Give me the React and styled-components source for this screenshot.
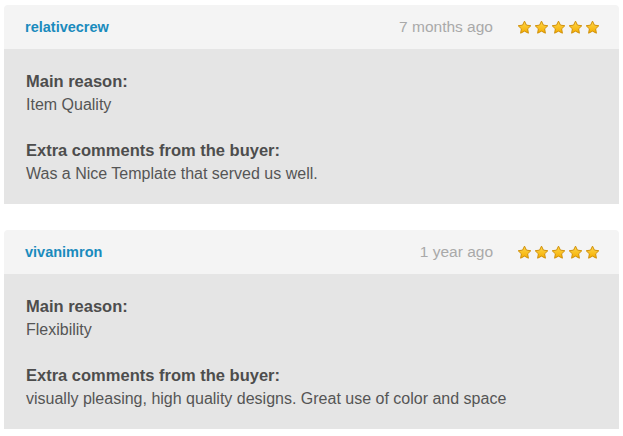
import React from 'react';
import styled, { createGlobalStyle } from 'styled-components';

const GlobalStyle = createGlobalStyle`
    body {
        margin: 0;
        background: #fff;
        font-family: "Liberation Sans", Arial, sans-serif;
    }
`;

const List = styled.div`
    display: flex;
    flex-direction: column;
    gap: 26px;
    padding: 5px 4px 0 4px;
`;

const Card = styled.div`
    border-radius: 4px 4px 0 0;
    overflow: hidden;
`;

const Header = styled.div`
    display: flex;
    align-items: center;
    height: 44px;
    padding: 0 19px 0 21px;
    background: #f4f4f4;
`;

const User = styled.a`
    flex: 1;
    font-size: 14.5px;
    font-weight: bold;
    color: #1a8bbd;
    text-decoration: none;
`;

const Time = styled.span`
    font-size: 15.5px;
    color: #a9a9a9;
    margin-right: 24px;
`;

const Stars = styled.div`
    display: flex;
    gap: 2px;
`;

const Body = styled.div`
    background: #e5e5e5;
    padding: 20px 22px 18px 22px;
    display: flex;
    flex-direction: column;
    gap: 21px;
`;

const Label = styled.div`
    font-size: 16.5px;
    font-weight: bold;
    line-height: 24px;
    color: #4d4d4d;
`;

const Text = styled.div`
    font-size: 16px;
    line-height: 24px;
    color: #555;
`;

const Star = () => (
    <svg width="15" height="15" viewBox="0 0 24 24">
        <defs>
            <linearGradient id="sg" x1="0" y1="0" x2="0" y2="1">
                <stop offset="0" stopColor="#ffd84a" />
                <stop offset="1" stopColor="#f5ad00" />
            </linearGradient>
        </defs>
        <path
            d="M12 1.8l3.1 6.4 7 1-5.1 4.9 1.2 7-6.2-3.3-6.2 3.3 1.2-7-5.1-4.9 7-1z"
            fill="url(#sg)"
            stroke="#d0900a"
            strokeWidth="1.6"
            strokeLinejoin="round"
        />
    </svg>
);

const reviews = [
    {
        user: 'relativecrew',
        time: '7 months ago',
        reason: 'Item Quality',
        comment: 'Was a Nice Template that served us well.'
    },
    {
        user: 'vivanimron',
        time: '1 year ago',
        reason: 'Flexibility',
        comment: 'visually pleasing, high quality designs. Great use of color and space'
    }
];

const App = () => (
    <>
        <GlobalStyle />
        <List>
            {reviews.map(r => (
                <Card key={r.user}>
                    <Header>
                        <User href="#">{r.user}</User>
                        <Time>{r.time}</Time>
                        <Stars>
                            {[0, 1, 2, 3, 4].map(i => <Star key={i} />)}
                        </Stars>
                    </Header>
                    <Body>
                        <div>
                            <Label>Main reason:</Label>
                            <Text>{r.reason}</Text>
                        </div>
                        <div>
                            <Label>Extra comments from the buyer:</Label>
                            <Text>{r.comment}</Text>
                        </div>
                    </Body>
                </Card>
            ))}
        </List>
    </>
);

export default App;
